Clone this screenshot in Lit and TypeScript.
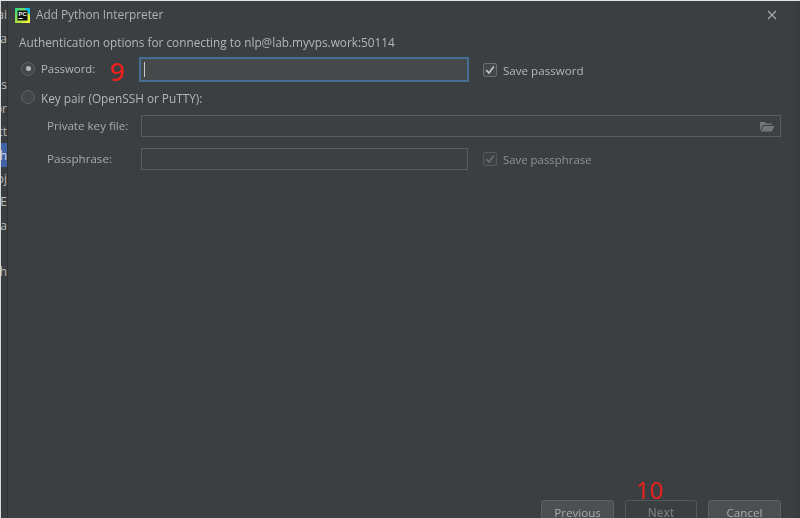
import { LitElement, html, css } from "lit";
import { customElement } from "lit/decorators.js";

const SIDE = [
  ["ai", false], ["a", false], ["", false], ["ns", false], ["or", false], ["ct", false],
  ["h", true], ["oj", false], ["E", false], ["ia", false], ["", false], ["h", false],
] as [string, boolean][];

@customElement("app-root")
export class AppRoot extends LitElement {
  static styles = css`
    :host {
      display: block;
      width: 800px;
      height: 518px;
      overflow: hidden;
      background: #3c3f41;
      color: #b4b7b8;
      font-family: "Open Sans", "Liberation Sans", sans-serif;
      font-size: 11.6px;
    }
    * { box-sizing: border-box; }
    .window {
      position: relative;
      display: flex;
      width: 800px;
      height: 518px;
      border-top: 1px solid #e4e4e4;
      border-left: 1px solid #d8d8d8;
      overflow: hidden;
      filter: blur(0.4px);
    }
    .side {
      width: 7px;
      flex: none;
      padding-top: 2px;
      background: #3a3d3f;
      border-right: 1px solid #2f3133;
      display: flex;
      flex-direction: column;
      overflow: hidden;
    }
    .side div {
      height: 23.4px;
      flex: none;
      display: flex;
      justify-content: flex-end;
      align-items: center;
      white-space: nowrap;
      font-size: 12px;
      color: #b9bcbd;
    }
    .side .sel { background: #3f63a5; color: #d5d8dc; }
    .dialog {
      flex: 1;
      min-width: 0;
      display: flex;
      flex-direction: column;
      padding-right: 5px;
    }
    .titlebar {
      height: 29px;
      flex: none;
      display: flex;
      align-items: center;
      padding: 0 18px 1px 7px;
      gap: 6px;
      color: #b0b3b4;
    }
    .titlebar .name { flex: 1; font-size: 11.8px; padding-bottom: 2px; }
    .close { display: block; margin-bottom: 1px; }
    .body {
      flex: 1;
      display: flex;
      flex-direction: column;
      padding: 0 14px 0 11px;
    }
    .intro { height: 25px; line-height: 25px; font-size: 11.8px; }
    .row {
      display: flex;
      align-items: center;
    }
    .radio {
      width: 14px;
      height: 14px;
      border-radius: 50%;
      flex: none;
      margin-left: 2px;
      background: #43474a;
      border: 1px solid #5e6264;
      display: flex;
      align-items: center;
      justify-content: center;
    }
    .radio i {
      width: 5px;
      height: 5px;
      border-radius: 50%;
      background: #b6b9ba;
    }
    .r1 { height: 26px; margin-top: 2px; }
    .r1 .radio { margin-bottom: 3px; }
    .r1 .lab { margin-left: 6px; width: 98px; padding-bottom: 4px; font-size: 11.4px; }
    .focus {
      width: 330px;
      height: 25px;
      background: #45494a;
      border: 2px solid #466d94;
      padding: 3px 0 3px 3px;
      margin: 0 14px 1px 0;
    }
    .caret { width: 1px; height: 15px; background: #c6c8c8; }
    .check {
      width: 14px;
      height: 14px;
      flex: none;
      border: 1px solid #6b6e70;
      border-radius: 2px;
      background: #43474a;
      margin-right: 6px;
      display: flex;
    }
    .check.off { border-color: #555859; background: #3f4244; }
    .r2 { height: 30px; }
    .r2 .radio { margin-bottom: 2px; }
    .r2 .lab { margin-left: 6px; font-size: 11.8px; }
    .r3 { height: 23px; margin-top: 1px; padding-left: 28px; }
    .r3 .cap { width: 94px; color: #a8abac; }
    .field {
      height: 22px;
      border: 1px solid #595c5e;
      background: #3d4042;
    }
    .wide {
      flex: 1;
      display: flex;
      align-items: center;
      justify-content: flex-end;
      padding-right: 5px;
    }
    .short { width: 327px; margin-right: 15px; }
    .r4 { margin-top: 10px; }
    .muted { color: #8f9294; font-size: 11.4px; padding-top: 2px; }
    .spacer { flex: 1; }
    .buttons {
      display: flex;
      justify-content: flex-end;
      gap: 11px;
      height: 18px;
      flex: none;
    }
    .btn {
      width: 73px;
      height: 26px;
      border-radius: 3px;
      border: 1px solid #5d6062;
      background: #4c5052;
      text-align: center;
      line-height: 23px;
      color: #a9acad;
      flex: none;
    }
    .btn.dis {
      background: #3c3f41;
      border-color: #55585a;
      color: #74777a;
      font-weight: 600;
      width: 72px;
    }
    .mark {
      position: absolute;
      color: #e8211c;
      font-family: "Noto Sans", sans-serif;
      line-height: 24px;
    }
    .m9 { left: 109px; top: 58px; font-size: 26px; font-weight: 500; }
    .m10 { left: 635px; top: 477px; font-size: 24px; }
    .rstrip {
      position: absolute;
      right: 0;
      top: 0;
      bottom: 0;
      width: 5px;
      background: #393c3e;
    }
    .pc { font: 700 6px "Liberation Sans", sans-serif; fill: #f0f0f0; }
  `;

  render() {
    const tick = (c: string) => html`<svg width="12" height="12" viewBox="0 0 12 12"><path d="M2.2 6.2 5 9 9.8 2.6" fill="none" stroke=${c} stroke-width="1.7"/></svg>`;
    return html`
      <div class="window">
        <div class="side">
          ${SIDE.map(([t, s]) => html`<div class=${s ? "sel" : ""}>${t}</div>`)}
        </div>
        <div class="dialog">
          <div class="titlebar">
            <svg width="15" height="15" viewBox="0 0 15 15">
              <defs>
                <linearGradient id="pc" x1="0" y1="0" x2="1" y2="1">
                  <stop offset="0" stop-color="#21d789"/>
                  <stop offset="0.6" stop-color="#b8e23a"/>
                  <stop offset="1" stop-color="#fcf84a"/>
                </linearGradient>
              </defs>
              <rect width="15" height="15" fill="url(#pc)"/>
              <path d="M9 0h6v7z" fill="#07c3f2"/>
              <rect x="2.5" y="2.5" width="10" height="10" fill="#101010"/>
              <text class="pc" x="3.4" y="8.4">PC</text>
              <rect x="3.6" y="10" width="4" height="1" fill="#f0f0f0"/>
            </svg>
            <span class="name">Add Python Interpreter</span>
            <svg class="close" width="10" height="10" viewBox="0 0 10 10"><path d="M1 1l8 8M9 1l-8 8" stroke="#aeb1b2" stroke-width="1.2"/></svg>
          </div>
          <div class="body">
            <div class="intro">Authentication options for connecting to nlp@lab.myvps.work:50114</div>
            <div class="row r1">
              <span class="radio"><i></i></span>
              <span class="lab">Password:</span>
              <div class="focus"><div class="caret"></div></div>
              <span class="check">${tick("#c4c6c7")}</span>
              <span>Save password</span>
            </div>
            <div class="row r2">
              <span class="radio"></span>
              <span class="lab">Key pair (OpenSSH or PuTTY):</span>
            </div>
            <div class="row r3">
              <span class="cap">Private key file:</span>
              <div class="field wide">
                <svg width="16" height="12" viewBox="0 0 16 12"><path d="M1 11V2h5l1 1.5h6V5H4L1 11zM4.6 6H15.5l-2.8 5.5H2z" fill="#737678"/></svg>
              </div>
            </div>
            <div class="row r3 r4">
              <span class="cap">Passphrase:</span>
              <div class="field short"></div>
              <span class="check off">${tick("#6d7072")}</span>
              <span class="muted">Save passphrase</span>
            </div>
            <div class="spacer"></div>
            <div class="buttons">
              <div class="btn">Previous</div>
              <div class="btn dis">Next</div>
              <div class="btn">Cancel</div>
            </div>
          </div>
        </div>
        <div class="rstrip"></div>
        <span class="mark m9">9</span>
        <span class="mark m10">10</span>
      </div>
    `;
  }
}
